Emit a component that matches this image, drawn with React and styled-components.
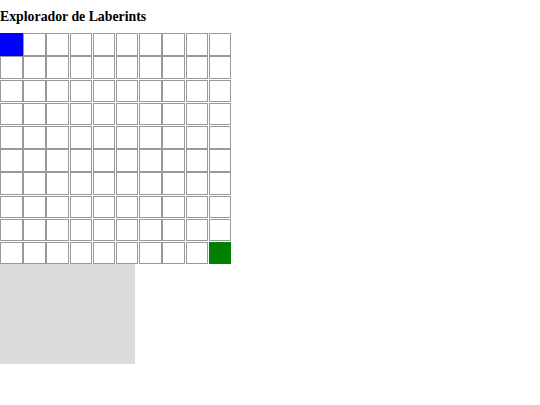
import React from 'react';
import styled, { createGlobalStyle } from 'styled-components';

const GlobalStyle = createGlobalStyle`
	body {
		margin: 0;
		background: #fff;
		font-family: 'Liberation Serif', 'Times New Roman', serif;
	}
`;

const Page = styled.div`
	display: flex;
	flex-direction: column;
	align-items: flex-start;
`;

const Title = styled.h1`
	font-size: 13.8px;
	font-weight: bold;
	line-height: normal;
	margin: 8.7px 0 8.6px;
	color: #000;
`;

const Maze = styled.div`
	display: grid;
	grid-template-columns: repeat(10, 22.5px);
	grid-auto-rows: 22.5px;
	gap: 0.7px;
`;

const Cell = styled.div`
	box-sizing: border-box;
	border: 1px solid ${({ kind }) => (kind ? 'transparent' : '#999')};
	background: ${({ kind }) =>
		kind === 'start' ? '#0000ff' : kind === 'end' ? '#008000' : '#fff'};
`;

const Panel = styled.div`
	width: 135px;
	height: 100px;
	background: #dcdcdc;
`;

const SIZE = 10;

const App = () => {
	const cells = [];
	for (let r = 0; r < SIZE; r++) {
		for (let c = 0; c < SIZE; c++) {
			let kind = null;
			if (r === 0 && c === 0) kind = 'start';
			if (r === SIZE - 1 && c === SIZE - 1) kind = 'end';
			cells.push(<Cell key={`${r}-${c}`} kind={kind} />);
		}
	}

	return (
		<>
			<GlobalStyle />
			<Page>
				<Title>Explorador de Laberints</Title>
				<Maze>{cells}</Maze>
				<Panel />
			</Page>
		</>
	);
};

export default App;
